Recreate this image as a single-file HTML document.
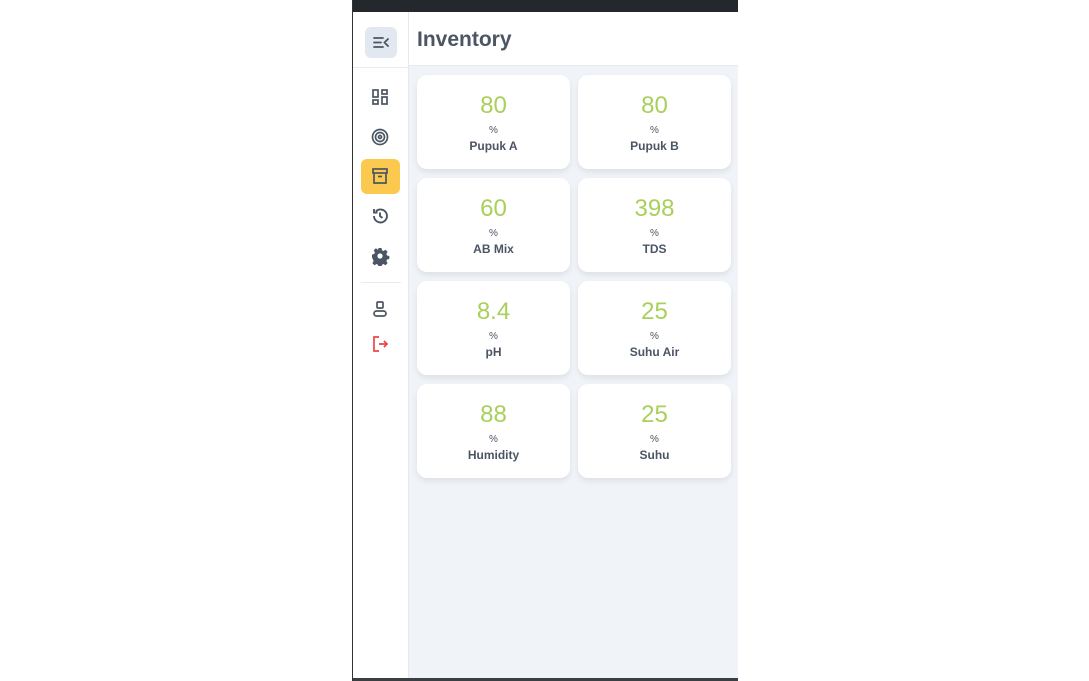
<!DOCTYPE html>
<html><head><meta charset="utf-8"><style>
*{box-sizing:border-box;margin:0;padding:0}
body{width:1089px;height:681px;background:#fff;position:relative;overflow:hidden;font-family:"Liberation Sans",sans-serif}
.frame{position:absolute;left:352px;top:0;width:386px;height:681px;background:#f0f3f8;border-left:1px solid #333}
.topbar{position:absolute;left:0;top:0;right:0;height:12px;background:#24282d}
.botbar{position:absolute;left:0;bottom:0;right:0;height:3px;background:#3a3f44}
.side{position:absolute;left:0;top:12px;width:56px;bottom:3px;background:#fff;border-right:1px solid #e5e8ee}
.header{position:absolute;left:56px;top:12px;right:0;height:54px;background:#fff;border-bottom:1px solid #e8ebf0}
.header h1{position:absolute;left:8px;top:16px;font-size:21px;font-weight:bold;color:#4b5563}
.tog{position:absolute;left:12px;top:15px;width:32px;height:31px;background:#e2e8f0;border-radius:6px}
.hr{position:absolute;left:0;width:56px;height:1px;background:#e8ebf0}
.ic{position:absolute;left:17px;width:20px;height:20px}
.act{position:absolute;left:8px;top:147px;width:39px;height:35px;background:#fcc94f;border-radius:6px}
.card{position:absolute;width:153px;height:94px;background:#fff;border-radius:10px;box-shadow:0 3px 6px rgba(0,0,0,.08);text-align:center}
.v{position:absolute;left:0;right:0;top:17px;font-size:24px;color:#a8d05a}
.p{position:absolute;left:0;right:0;top:50px;font-size:10px;color:#4b5563}
.l{position:absolute;left:0;right:0;top:64px;font-size:12px;font-weight:bold;color:#4b5563}
</style></head><body>
<div class="frame">
<div class="topbar"></div>
<div class="side">
 <div class="tog"><svg width="32" height="31" viewBox="0 0 32 31"><path d="M9 11h9M9 15.5h7M9 20h9M23 12l-3.5 3.5L23 19" stroke="#4b5563" stroke-width="1.8" fill="none" stroke-linecap="round"/></svg></div>
 <div class="hr" style="top:55px"></div>
 <svg class="ic" style="top:75px" viewBox="0 0 20 20" fill="none" stroke="#4b5563" stroke-width="1.7"><rect x="3" y="3" width="5" height="7"/><rect x="12" y="3" width="5" height="4"/><rect x="3" y="13" width="5" height="4"/><rect x="12" y="10" width="5" height="7"/></svg>
 <svg class="ic" style="top:115px" viewBox="0 0 20 20" fill="none" stroke="#4b5563" stroke-width="1.7"><circle cx="10" cy="10" r="7.5"/><circle cx="10" cy="10" r="4.5"/><circle cx="10" cy="10" r="1.5"/></svg>
 <div class="act"></div>
 <svg class="ic" style="top:154px" viewBox="0 0 20 20" fill="none" stroke="#4b5563" stroke-width="1.7"><rect x="3" y="3" width="14" height="4"/><path d="M4 7v10h12V7M8 10.5h4"/></svg>
 <svg class="ic" style="top:194px" viewBox="0 0 20 20" fill="none" stroke="#4b5563" stroke-width="1.9"><path d="M4 10a6.5 6.5 0 1 0 2-4.7M4 3v3.5h3.5M10 6.5V10l2.5 2"/></svg>
 <svg class="ic" style="top:234px" viewBox="0 0 20 20"><path fill="#4b5563" d="M8.5 2h3l.5 2.3 1.5.7 2-1.2 2.1 2.1-1.2 2 .6 1.6 2.3.5v3l-2.3.5-.6 1.6 1.2 2-2.1 2.1-2-1.2-1.5.7-.5 2.3h-3l-.5-2.3-1.5-.7-2 1.2-2.1-2.1 1.2-2-.6-1.6L2 11.5v-3l2.3-.5.6-1.6-1.2-2 2.1-2.1 2 1.2L8 4.3z"/><circle cx="10" cy="10" r="2.6" fill="#fff"/></svg>
 <div class="hr" style="top:270px;left:8px;width:40px"></div>
 <svg class="ic" style="top:287px" viewBox="0 0 20 20" fill="none" stroke="#4b5563" stroke-width="1.7"><rect x="7" y="3" width="6" height="6" rx="1"/><rect x="4" y="12" width="12" height="5" rx="2.5"/></svg>
 <svg class="ic" style="top:322px" viewBox="0 0 20 20" fill="none" stroke="#ef4444" stroke-width="1.7"><path d="M9 3H4v14h5M9 10h8M14 7l3 3-3 3"/></svg>
</div>
<div class="header"><h1>Inventory</h1></div>
<div class="card" style="left:64px;top:75px"><div class="v">80</div><div class="p">%</div><div class="l">Pupuk A</div></div>
<div class="card" style="left:225px;top:75px"><div class="v">80</div><div class="p">%</div><div class="l">Pupuk B</div></div>
<div class="card" style="left:64px;top:178px"><div class="v">60</div><div class="p">%</div><div class="l">AB Mix</div></div>
<div class="card" style="left:225px;top:178px"><div class="v">398</div><div class="p">%</div><div class="l">TDS</div></div>
<div class="card" style="left:64px;top:281px"><div class="v">8.4</div><div class="p">%</div><div class="l">pH</div></div>
<div class="card" style="left:225px;top:281px"><div class="v">25</div><div class="p">%</div><div class="l">Suhu Air</div></div>
<div class="card" style="left:64px;top:384px"><div class="v">88</div><div class="p">%</div><div class="l">Humidity</div></div>
<div class="card" style="left:225px;top:384px"><div class="v">25</div><div class="p">%</div><div class="l">Suhu</div></div>
<div class="botbar"></div>
</div>
</body></html>
